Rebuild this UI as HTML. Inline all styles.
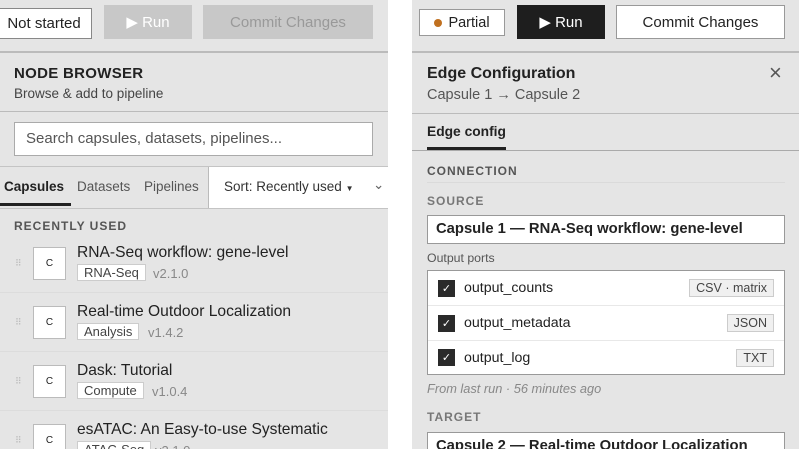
<!DOCTYPE html><html><head><style>
*{box-sizing:border-box;margin:0;padding:0}
html,body{width:799px;height:449px;overflow:hidden}
body{background:#fff;font-family:"Liberation Sans",sans-serif;color:#222;position:relative}
.a{position:absolute}
.p{background:#e5e5e5;height:449px;top:0}
.btn{position:absolute;display:flex;align-items:center;justify-content:center;font-size:15px}
.hl{position:absolute;height:1px;background:#c4c4c4}
.ic{position:absolute;left:33px;width:33px;height:33px;background:#fff;border:1px solid #bbb;font-size:10px;display:flex;align-items:center;justify-content:center}
.tt{position:absolute;left:77px;font-size:15.6px;color:#222}
.tag{position:absolute;left:77px;font-size:13px;background:#fff;border:1px solid #ccc;padding:0 6px;color:#444}
.ver{position:absolute;font-size:13px;color:#888}
.dr{position:absolute;left:15px;color:#bbb;font-size:9px}
.cap{font-size:12px;font-weight:bold;letter-spacing:1px;color:#555}
.row{position:absolute;left:0;right:0;height:35px;border-bottom:1px solid #e8e8e8;display:flex;align-items:center;font-size:14.2px}
.cb{width:17px;height:17px;background:#2a2a2a;color:#fff;font-size:11px;display:flex;align-items:center;justify-content:center;margin:0 9px 0 10px}
.pt{position:absolute;right:10px;font-size:12.5px;color:#444;background:#f0f0f0;border:1px solid #ccc;padding:1px 6px}
</style></head><body>
<div class="a p" style="left:0;width:388px"></div>
<div class="a p" style="left:412px;width:387px"></div>
<!-- left header -->
<div class="btn" style="left:-10px;top:8px;width:102px;height:31px;background:#fff;border:1px solid #888;padding-left:6px">Not started</div>
<div class="btn" style="left:104px;top:5px;width:88px;height:34px;background:#c8c8c8;color:#fff">▶ Run</div>
<div class="btn" style="left:203px;top:5px;width:170px;height:34px;background:#c8c8c8;color:#999">Commit Changes</div>
<div class="hl" style="left:0;width:388px;top:51px;background:#bbb;height:2px"></div>
<div class="a" style="left:14px;top:65px;font-size:15px;font-weight:bold;letter-spacing:.3px">NODE BROWSER</div>
<div class="a" style="left:14px;top:86px;font-size:13.5px;color:#444">Browse &amp; add to pipeline</div>
<div class="hl" style="left:0;width:388px;top:111px;background:#bbb"></div>
<div class="a" style="left:14px;top:122px;width:359px;height:34px;background:#fff;border:1px solid #aaa;font-size:15px;color:#555;padding:7px 11px">Search capsules, datasets, pipelines...</div>
<div class="hl" style="left:0;width:388px;top:166px"></div>
<div class="a" style="left:4px;top:179px;font-size:13.5px;font-weight:bold">Capsules</div>
<div class="a" style="left:77px;top:179px;font-size:13.5px;color:#555">Datasets</div>
<div class="a" style="left:144px;top:179px;font-size:13.5px;color:#555">Pipelines</div>
<div class="a" style="left:0;top:203px;width:71px;height:3px;background:#222"></div>
<div class="a" style="left:208px;top:167px;width:180px;height:41px;background:#fff;border-left:1px solid #bbb;font-size:13.5px;color:#333;padding:12px 15px">Sort: Recently used <span style="font-size:8px">▼</span><span style="position:absolute;left:164px;top:10px;color:#666">⌄</span></div>
<div class="hl" style="left:0;width:388px;top:208px"></div>
<div class="a cap" style="left:14px;top:219px">RECENTLY USED</div>
<div class="dr" style="top:258px">⠿</div><div class="ic" style="top:247px">C</div>
<div class="tt" style="top:244px">RNA-Seq workflow: gene-level</div><div class="tag" style="top:264px">RNA-Seq</div><div class="ver" style="left:153px;top:266px">v2.1.0</div>
<div class="hl" style="left:0;width:388px;top:292px;background:#dcdcdc"></div>
<div class="dr" style="top:317px">⠿</div><div class="ic" style="top:306px">C</div>
<div class="tt" style="top:303px">Real-time Outdoor Localization</div><div class="tag" style="top:323px">Analysis</div><div class="ver" style="left:148px;top:325px">v1.4.2</div>
<div class="hl" style="left:0;width:388px;top:351px;background:#dcdcdc"></div>
<div class="dr" style="top:376px">⠿</div><div class="ic" style="top:365px">C</div>
<div class="tt" style="top:362px">Dask: Tutorial</div><div class="tag" style="top:382px">Compute</div><div class="ver" style="left:152px;top:384px">v1.0.4</div>
<div class="hl" style="left:0;width:388px;top:410px;background:#dcdcdc"></div>
<div class="dr" style="top:435px">⠿</div><div class="ic" style="top:424px">C</div>
<div class="tt" style="top:421px">esATAC: An Easy-to-use Systematic</div><div class="tag" style="top:441px">ATAC-Seq</div><div class="ver" style="left:155px;top:443px">v2.1.0</div>
<!-- right -->
<div class="btn" style="left:419px;top:9px;width:86px;height:27px;background:#fff;border:1px solid #999;font-size:14.5px"><span style="display:inline-block;width:8px;height:8px;border-radius:50%;background:#c0701f;margin-right:6px"></span>Partial</div>
<div class="btn" style="left:517px;top:5px;width:88px;height:34px;background:#1e1e1e;color:#fff">▶ Run</div>
<div class="btn" style="left:616px;top:5px;width:169px;height:34px;background:#fff;border:1px solid #999">Commit Changes</div>
<div class="hl" style="left:412px;width:387px;top:51px;background:#bbb;height:2px"></div>
<div class="a" style="left:427px;top:65px;font-size:16px;font-weight:bold">Edge Configuration</div>
<div class="a" style="left:427px;top:87px;font-size:14.5px;color:#555">Capsule 1 → Capsule 2</div>
<div class="a" style="left:769px;top:60px;font-size:22px;color:#555">×</div>
<div class="hl" style="left:412px;width:387px;top:113px;background:#bbb"></div>
<div class="a" style="left:427px;top:124px;font-size:13.8px;font-weight:bold">Edge config</div>
<div class="a" style="left:427px;top:147px;width:79px;height:3px;background:#222"></div>
<div class="hl" style="left:412px;width:387px;top:150px;background:#aaa"></div>
<div class="a cap" style="left:427px;top:164px">CONNECTION</div>
<div class="hl" style="left:427px;width:358px;top:182px;background:#dadada"></div>
<div class="a cap" style="left:427px;top:194px;color:#777">SOURCE</div>
<div class="a" style="left:427px;top:215px;width:358px;height:29px;background:#fff;border:1px solid #999;font-size:14.8px;font-weight:bold;padding:5px 8px">Capsule 1 — RNA-Seq workflow: gene-level</div>
<div class="a" style="left:427px;top:251px;font-size:12.3px;color:#555">Output ports</div>
<div class="a" style="left:427px;top:270px;width:358px;height:105px;background:#fff;border:1px solid #999">
<div class="row" style="top:0"><div class="cb">✓</div>output_counts<span class="pt">CSV · matrix</span></div>
<div class="row" style="top:35px"><div class="cb">✓</div>output_metadata<span class="pt">JSON</span></div>
<div class="row" style="top:69px;border:0"><div class="cb">✓</div>output_log<span class="pt">TXT</span></div>
</div>
<div class="a" style="left:427px;top:381px;font-size:12.8px;color:#888;font-style:italic">From last run · 56 minutes ago</div>
<div class="a cap" style="left:427px;top:410px;color:#777">TARGET</div>
<div class="a" style="left:427px;top:432px;width:358px;height:29px;background:#fff;border:1px solid #999;font-size:14.8px;font-weight:bold;padding:5px 8px">Capsule 2 — Real-time Outdoor Localization</div>
</body></html>
